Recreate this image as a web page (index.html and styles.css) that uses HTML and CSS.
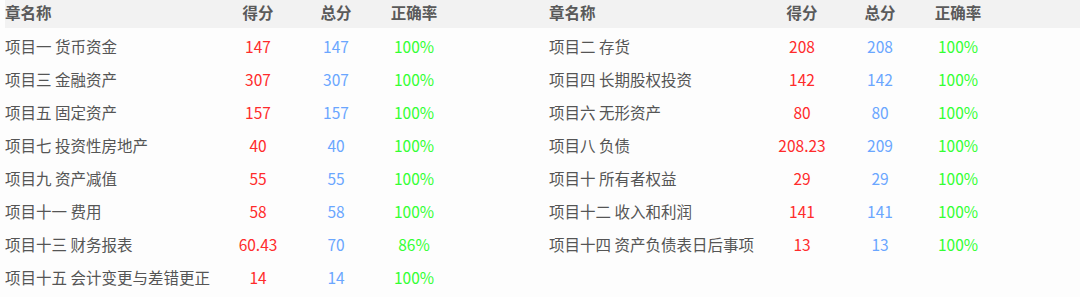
FILE: index.html
```html
<!DOCTYPE html>
<html lang="zh">
<head>
<meta charset="utf-8">
<link rel="stylesheet" href="styles.css">
</head>
<body>
<div class="page">
  <div class="tbl">
    <div class="row head"><div class="name">章名称</div><div class="num">得分</div><div class="num">总分</div><div class="num">正确率</div></div>
    <div class="row"><div class="name">项目一 货币资金</div><div class="num score">147</div><div class="num total">147</div><div class="num rate">100%</div></div>
    <div class="row"><div class="name">项目三 金融资产</div><div class="num score">307</div><div class="num total">307</div><div class="num rate">100%</div></div>
    <div class="row"><div class="name">项目五 固定资产</div><div class="num score">157</div><div class="num total">157</div><div class="num rate">100%</div></div>
    <div class="row"><div class="name">项目七 投资性房地产</div><div class="num score">40</div><div class="num total">40</div><div class="num rate">100%</div></div>
    <div class="row"><div class="name">项目九 资产减值</div><div class="num score">55</div><div class="num total">55</div><div class="num rate">100%</div></div>
    <div class="row"><div class="name">项目十一 费用</div><div class="num score">58</div><div class="num total">58</div><div class="num rate">100%</div></div>
    <div class="row"><div class="name">项目十三 财务报表</div><div class="num score">60.43</div><div class="num total">70</div><div class="num rate">86%</div></div>
    <div class="row"><div class="name">项目十五 会计变更与差错更正</div><div class="num score">14</div><div class="num total">14</div><div class="num rate">100%</div></div>
  </div>
  <div class="tbl">
    <div class="row head"><div class="name">章名称</div><div class="num">得分</div><div class="num">总分</div><div class="num">正确率</div></div>
    <div class="row"><div class="name">项目二 存货</div><div class="num score">208</div><div class="num total">208</div><div class="num rate">100%</div></div>
    <div class="row"><div class="name">项目四 长期股权投资</div><div class="num score">142</div><div class="num total">142</div><div class="num rate">100%</div></div>
    <div class="row"><div class="name">项目六 无形资产</div><div class="num score">80</div><div class="num total">80</div><div class="num rate">100%</div></div>
    <div class="row"><div class="name">项目八 负债</div><div class="num score">208.23</div><div class="num total">209</div><div class="num rate">100%</div></div>
    <div class="row"><div class="name">项目十 所有者权益</div><div class="num score">29</div><div class="num total">29</div><div class="num rate">100%</div></div>
    <div class="row"><div class="name">项目十二 收入和利润</div><div class="num score">141</div><div class="num total">141</div><div class="num rate">100%</div></div>
    <div class="row"><div class="name">项目十四 资产负债表日后事项</div><div class="num score">13</div><div class="num total">13</div><div class="num rate">100%</div></div>
  </div>
</div>
</body>
</html>
```
FILE: styles.css
```css
html, body {
  margin: 0;
  padding: 0;
  background: #fdfdfd;
  overflow: hidden;
}
body {
  font-family: "Noto Sans CJK SC", "Noto Sans", sans-serif;
  font-size: 15.5px;
  color: #555555;
}
.page {
  display: grid;
  grid-template-columns: 544px 544px;
  padding-left: 5px;
  width: 1100px;
}
.tbl {
  display: flex;
  flex-direction: column;
}
.row {
  box-sizing: border-box;
  display: grid;
  grid-template-columns: 214px 78px 78px 78px 1fr;
  height: 33px;
  padding-top: 3px;
  align-items: center;
  white-space: nowrap;
}
.row.head {
  height: 28px;
  padding-top: 0;
  padding-bottom: 5px;
  background: #f2f2f2;
  font-weight: bold;
  color: #5a5a5a;
}
.num {
  text-align: center;
}
.score { color: #ff2b2b; }
.total { color: #6aa6ff; }
.rate { color: #33ff33; }
```
